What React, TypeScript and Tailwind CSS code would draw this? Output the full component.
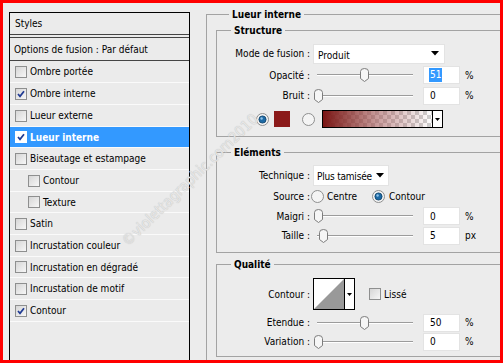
import React from 'react';

type StyleRow = { label: string; checked: boolean; nested?: boolean; selected?: boolean; h: string };

const styleRows: StyleRow[] = [
  { label: 'Ombre portée', checked: false, h: 'h-[22px]' },
  { label: 'Ombre interne', checked: true, h: 'h-[22px]' },
  { label: 'Lueur externe', checked: false, h: 'h-[22px]' },
  { label: 'Lueur interne', checked: true, selected: true, h: 'h-[21px]' },
  { label: 'Biseautage et estampage', checked: false, h: 'h-[22px]' },
  { label: 'Contour', checked: false, nested: true, h: 'h-[22px]' },
  { label: 'Texture', checked: false, nested: true, h: 'h-[21px]' },
  { label: 'Satin', checked: false, h: 'h-[22px]' },
  { label: 'Incrustation couleur', checked: false, h: 'h-[22px]' },
  { label: 'Incrustation en dégradé', checked: false, h: 'h-[21px]' },
  { label: 'Incrustation de motif', checked: false, h: 'h-[22px]' },
  { label: 'Contour', checked: true, h: 'h-[22px]' },
];

function Check({ checked, selected }: { checked: boolean; selected?: boolean }) {
  return (
    <span
      className={
        selected
          ? 'w-[12px] h-[12px] border border-white bg-white flex items-center justify-center shrink-0'
          : 'w-[12px] h-[12px] border border-[#8e8f8f] bg-gradient-to-br from-[#d6d6d6] to-[#f7f7f7] flex items-center justify-center shrink-0'
      }
    >
      {checked && (
        <svg width="8" height="8" viewBox="0 0 8 8">
          <path d="M1 4 L3 6.3 L7 1.2" stroke="#1f3a93" strokeWidth="1.7" fill="none" />
        </svg>
      )}
    </span>
  );
}

function Radio({ on }: { on?: boolean }) {
  return (
    <svg width="13" height="13" viewBox="0 0 13 13" className="shrink-0">
      <circle cx="6.5" cy="6.5" r="6" fill="#f4f4f4" stroke="#8e8f8f" />
      {on && <circle cx="6.5" cy="6.5" r="3.6" fill="#1d6aa5" stroke="#0d3f66" strokeWidth="0.8" />}
      {on && <circle cx="5.6" cy="5.5" r="1.2" fill="#8fc3ea" />}
    </svg>
  );
}

function Slider({ thumb }: { thumb: number }) {
  return (
    <div className="relative w-[107px] h-[16px] shrink-0">
      <div className="absolute left-[4px] w-[96px] top-[7px] h-[2px] border-t border-[#9c9c9c] border-b border-b-white" />
      <svg width="9" height="14" viewBox="0 0 9 14" className="absolute top-[1px]" style={{ left: thumb - 4 }}>
        <path d="M0.5 3.5 Q0.5 0.5 4.5 0.5 Q8.5 0.5 8.5 3.5 V10.5 L4.5 13.5 L0.5 10.5 Z" fill="#f6f6f6" stroke="#7d7d7d" />
      </svg>
    </div>
  );
}

function Field({ value, hl }: { value: string; hl?: boolean }) {
  return (
    <div className="ml-[3px] w-[37px] h-[18px] bg-white border border-[#e3e3e3] flex items-center pl-[5px] shrink-0">
      {hl ? <span className="bg-[#3399ff] text-white px-[1px] leading-[14px]">{value}</span> : <span className="pl-[1px]">{value}</span>}
    </div>
  );
}

function Label({ text }: { text: string }) {
  return <div className="w-[93px] text-right shrink-0 whitespace-nowrap">{text}</div>;
}

function SliderRow({ label, thumb, value, unit, h, hl }: { label: string; thumb: number; value: string; unit: string; h: string; hl?: boolean }) {
  return (
    <div className={`flex items-center ${h}`}>
      <Label text={label} />
      <div className="ml-[3px]">
        <Slider thumb={thumb} />
      </div>
      <Field value={value} hl={hl} />
      <span className="ml-[5px]">{unit}</span>
    </div>
  );
}

function Caret() {
  return (
    <svg width="8" height="5" viewBox="0 0 8 5" className="shrink-0">
      <path d="M0 0 H8 L4 4.5 Z" fill="#000" />
    </svg>
  );
}

export default function App() {
  return (
    <div className="relative w-[503px] h-[363px] border-[3px] border-[#ff0000] bg-[#ececec] overflow-hidden flex items-start pl-[6px] text-[10px] leading-[13px] text-black font-['DejaVu_Sans_Condensed','DejaVu_Sans',sans-serif]">
      {/* styles list */}
      <div className="mt-[9px] w-[181px] h-[360px] border border-black bg-[#ebebeb] shrink-0 flex flex-col">
        <div className="h-[22px] border-b border-[#444] flex items-center pl-[5px]">Styles</div>
        <div className="mt-[2px] h-[24px] border-t border-b border-[#444] flex items-center pl-[4px]">Options de fusion : Par défaut</div>
        {styleRows.map((r, i) => (
          <div
            key={i}
            className={`${r.h} border-b border-[#fafafa] flex items-center gap-[3px] whitespace-nowrap ${r.nested ? 'pl-[18px]' : 'pl-[5px]'} ${r.selected ? 'bg-[#3399ff] text-white font-bold' : ''}`}
          >
            <Check checked={r.checked} selected={r.selected} />
            <span>{r.label}</span>
          </div>
        ))}
      </div>

      {/* settings */}
      <fieldset className="ml-[16px] mt-[5px] w-[298px] h-[370px] border border-[#a3a3a3] pl-[9px] shrink-0">
        <legend className="ml-[13px] px-[3px] font-bold">Lueur interne</legend>

        <fieldset className="mt-[3px] w-[290px] border border-[#a3a3a3] pb-[7px]">
          <legend className="ml-[14px] px-[3px] font-bold">Structure</legend>
          <div className="mt-[6px] flex items-center h-[21px]">
            <Label text="Mode de fusion :" />
            <div className="ml-[3px] w-[132px] h-[20px] bg-white border border-[#e3e3e3] flex items-center justify-between pl-[4px] pr-[5px]">
              <span className="mt-[3px]">Produit</span>
              <Caret />
            </div>
          </div>
          <SliderRow label="Opacité :" thumb={51} value="51" unit="%" h="h-[21px] pt-[1px]" hl />
          <SliderRow label="Bruit :" thumb={5} value="0" unit="%" h="h-[21px]" />
          <div className="mt-[3px] h-[20px] flex items-center pl-[39px]">
            <Radio on />
            <div className="ml-[5px] w-[16px] h-[16px] bg-[#8b1a1a]" />
            <div className="ml-[12px]">
              <Radio />
            </div>
            <div className="ml-[7px] w-[121px] h-[18px] border border-black flex">
              <div className="flex-1 bg-[repeating-conic-gradient(#cfcfcf_0%_25%,#ffffff_0%_50%)] bg-[length:8px_8px]">
                <div className="w-full h-full bg-gradient-to-r from-[#7a1414] via-[#a55a5a]/60 to-transparent" />
              </div>
              <div className="w-[10px] border-l border-black bg-white flex items-center justify-center">
                <svg width="5" height="3" viewBox="0 0 5 3"><path d="M0 0 H5 L2.5 3 Z" fill="#000" /></svg>
              </div>
            </div>
          </div>
        </fieldset>

        <fieldset className="mt-[9px] w-[290px] border border-[#a3a3a3] pb-[6px]">
          <legend className="ml-[14px] px-[3px] font-bold">Eléments</legend>
          <div className="mt-[6px] flex items-center h-[21px]">
            <Label text="Technique :" />
            <div className="ml-[3px] w-[76px] h-[21px] bg-white border border-[#e3e3e3] flex items-center justify-between pl-[3px] pr-[4px]">
              <span className="mt-[2px] whitespace-nowrap tracking-[-0.2px]">Plus tamisée</span>
              <Caret />
            </div>
          </div>
          <div className="flex items-center h-[20px] pt-[1px]">
            <Label text="Source :" />
            <div className="ml-[1px]"><Radio /></div>
            <span className="ml-[3px]">Centre</span>
            <div className="ml-[15px]"><Radio on /></div>
            <span className="ml-[4px]">Contour</span>
          </div>
          <SliderRow label="Maigri :" thumb={5} value="0" unit="%" h="h-[19px] pt-[1px]" />
          <SliderRow label="Taille :" thumb={10} value="5" unit="px" h="h-[21px]" />
        </fieldset>

        <fieldset className="mt-[5px] w-[290px] border border-[#a3a3a3] pb-[5px]">
          <legend className="ml-[14px] px-[3px] font-bold">Qualité</legend>
          <div className="mt-[7px] flex items-center h-[32px]">
            <Label text="Contour :" />
            <div className="ml-[3px] w-[42px] h-[32px] border border-black bg-white flex">
              <svg width="30" height="30" viewBox="0 0 30 30" className="shrink-0">
                <path d="M0 30 L30 0 V30 Z" fill="#999999" />
              </svg>
              <div className="flex-1 border-l border-black flex items-center justify-center">
                <svg width="5" height="3" viewBox="0 0 5 3"><path d="M0 0 H5 L2.5 3 Z" fill="#000" /></svg>
              </div>
            </div>
            <div className="ml-[14px]">
              <Check checked={false} />
            </div>
            <span className="ml-[3px]">Lissé</span>
          </div>
          <SliderRow label="Etendue :" thumb={51} value="50" unit="%" h="h-[20px] mt-[2px] pt-[1px]" />
          <SliderRow label="Variation :" thumb={5} value="0" unit="%" h="h-[19px]" />
        </fieldset>
      </fieldset>

      {/* watermark */}
      <div className="absolute left-[187px] top-[177px] -translate-x-1/2 -translate-y-1/2 rotate-[-44deg] text-[15px] leading-[16px] text-[#e6e6e6] [text-shadow:0_0_1px_#b5b5b5] whitespace-nowrap pointer-events-none">
        ©violettagraphic.com2010
      </div>
    </div>
  );
}
